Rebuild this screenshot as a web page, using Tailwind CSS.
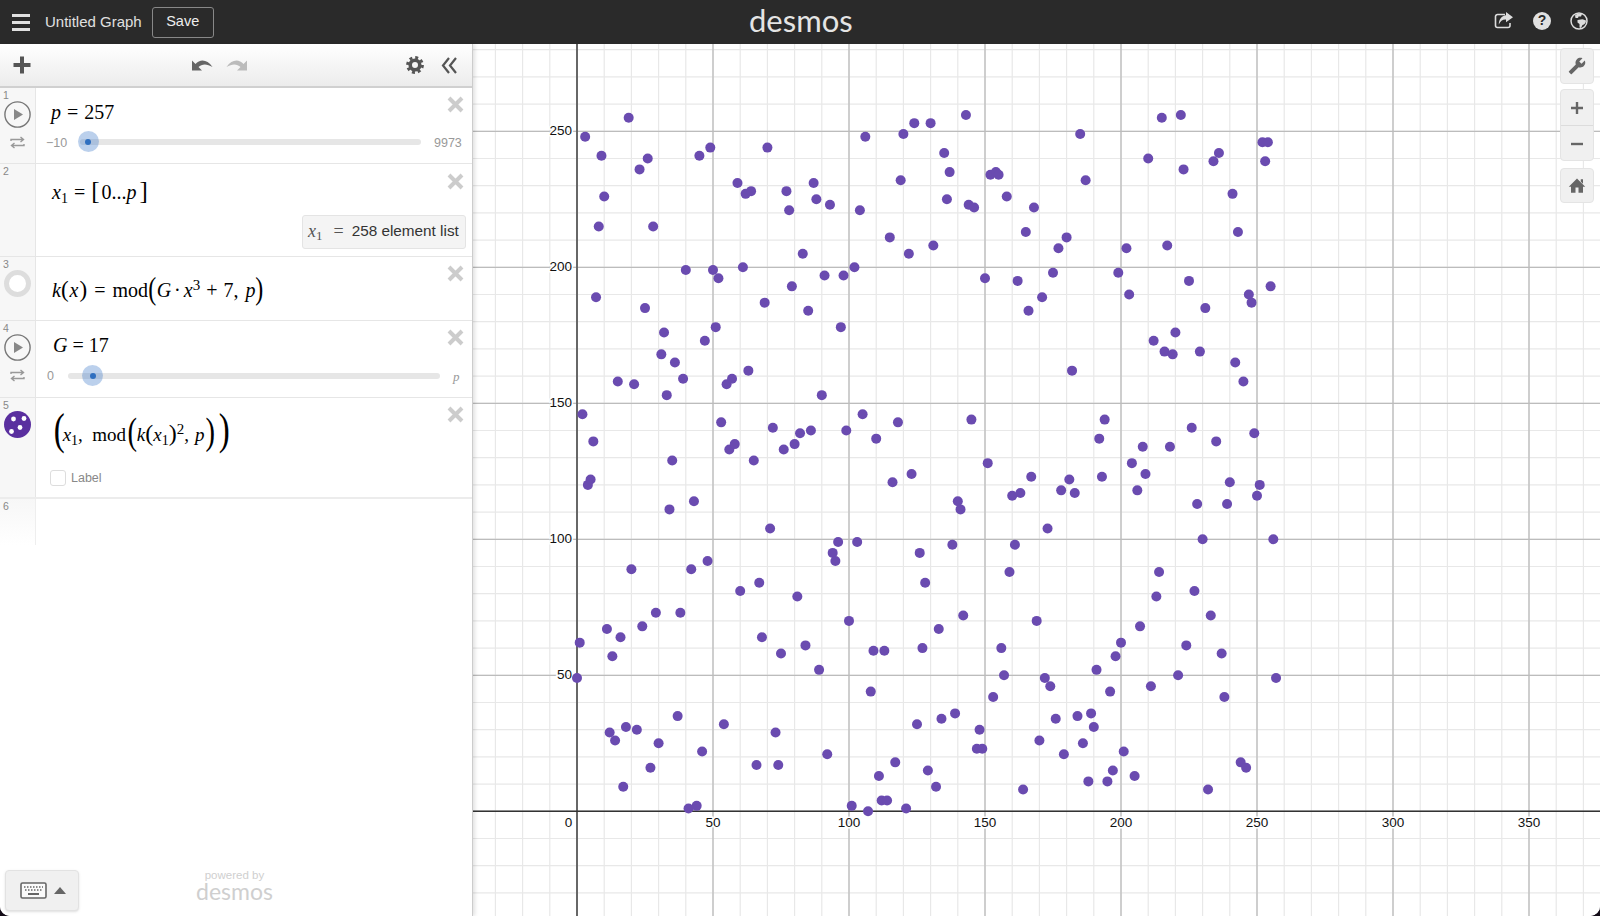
<!DOCTYPE html>
<html lang="en">
<head>
<meta charset="utf-8">
<title>Untitled Graph</title>
<script src="https://cdn.jsdelivr.net/npm/@tailwindcss/browser@4"></script>
</head>
<body class="bg-[#140c18] font-['Liberation_Sans',sans-serif]">
<div class="flex h-[916px] w-[1600px] flex-col overflow-hidden rounded-b-[10px] bg-white">

    <!-- Top bar -->
    <header class="relative flex h-[44px] shrink-0 items-center bg-[#2a2a2a] text-[#e0e0e0]">
        <div class="ml-[12px] flex w-[18px] flex-col gap-[4px]">
            <div class="h-[3px] bg-[#e0e0e0]"></div>
            <div class="h-[3px] bg-[#e0e0e0]"></div>
            <div class="h-[3px] bg-[#e0e0e0]"></div>
        </div>
        <span class="ml-[15px] text-[15px]">Untitled Graph</span>
        <button class="ml-[10px] h-[31px] w-[62px] rounded-[3px] border border-[#888] text-[14.5px] text-[#eee]">Save</button>
        <span class="absolute left-[749px] top-[0px] font-['Lato',sans-serif] text-[31px] leading-[40px] text-[#e4e4e4]">desmos</span>
        <div class="mb-[3px] ml-auto flex items-center">
            <svg class="mr-[20px]" width="19" height="17" viewBox="0 0 19 17" fill="none">
                <path d="M11 2.5H3.5a2 2 0 0 0-2 2V13.5a2 2 0 0 0 2 2H14a2 2 0 0 0 2-2V11" stroke="#ddd" stroke-width="1.6"/>
                <path d="M12 0L19 5.2L12 10.2V7.4C8.6 7.2 6.2 9 4.8 12.5C4.8 7.4 7.6 3.6 12 3.2Z" fill="#ddd"/>
            </svg>
            <div class="mr-[19px] flex h-[18px] w-[18px] items-center justify-center rounded-full bg-[#e0e0e0] text-[14px] font-bold text-[#2a2a2a]">?</div>
            <svg class="mr-[12px]" width="18" height="18" viewBox="0 0 18 18" fill="none">
                <circle cx="9" cy="9" r="8" stroke="#ddd" stroke-width="1.5"/>
                <path d="M5 3.5C7 1.5 10 1 12 2L11 4.5L8.5 4.5L8 6L5.5 6Z" fill="#ddd"/>
                <path d="M7.5 8L12.5 7.2L16 8.5C16 11 14.5 12.5 12.5 13L11 16L9.5 15.5L9.5 12L7.5 10.5Z" fill="#ddd"/>
            </svg>
        </div>
    </header>

    <div class="flex min-h-0 flex-1">
        <!-- Expression list -->
        <aside class="z-10 flex w-[473px] shrink-0 flex-col border-r border-[#ccc] bg-white shadow-[2px_0_4px_rgba(0,0,0,.12)]">
            <!-- Toolbar -->
            <div class="flex h-[44px] shrink-0 items-center border-b-2 border-[#d0d0d0] bg-gradient-to-b from-[#ffffff] to-[#ececec]">
                <svg class="ml-[13px]" width="18" height="18" viewBox="0 0 18 18"><path d="M9 0.5V17.5M0.5 9H17.5" stroke="#555" stroke-width="4"/></svg>
                <svg class="mb-[2px] ml-[160px]" width="22" height="13" viewBox="0 0 22 13"><path d="M1 12.5V2.5L4.5 6C9 1 16 1 21.5 9C16 5.5 11 5.5 7.5 9L11 12.5Z" fill="#666"/></svg>
                <svg class="mb-[2px] ml-[13px]" width="22" height="13" viewBox="0 0 22 13"><path d="M21 12.5V2.5L17.5 6C13 1 6 1 0.5 9C6 5.5 11 5.5 14.5 9L11 12.5Z" fill="#bbb"/></svg>
                <svg class="ml-[158px]" width="18" height="18" viewBox="0 0 18 18" fill="none">
                    <circle cx="9" cy="9" r="7.5" stroke="#555" stroke-width="2.8" stroke-dasharray="2.95 2.94"/>
                    <circle cx="9" cy="9" r="4.8" stroke="#555" stroke-width="3.6"/>
                </svg>
                <svg class="ml-[17px]" width="16" height="17" viewBox="0 0 16 17" fill="none">
                    <path d="M8 1L2 8.5L8 16M15 1L9 8.5L15 16" stroke="#555" stroke-width="2.2"/>
                </svg>
            </div>

            <!-- 1: p slider -->
            <div class="relative flex h-[76px] shrink-0 border-b border-[#e6e6e6]">
                <div class="w-[36px] shrink-0 border-r border-[#e6e6e6] bg-[#f7f7f7]">
                    <div class="h-[13px] pl-[3px] pt-[2px] text-[10.5px] leading-none text-[#888]">1</div>
                    <svg class="mx-auto" width="27" height="27" viewBox="0 0 27 27" fill="none">
                        <circle cx="13.5" cy="13.5" r="12.6" stroke="#777" stroke-width="1.4"/>
                        <path d="M10 8L19 13.5L10 19Z" fill="#888"/>
                    </svg>
                    <svg class="mx-auto mt-[8px]" width="15" height="13" viewBox="0 0 15 13" fill="none">
                        <path d="M1 5V3.5H13M10.5 1L13.5 3.5L10.5 6M14 8V9.5H2M4.5 7L1.5 9.5L4.5 12" stroke="#999" stroke-width="1.4"/>
                    </svg>
                </div>
                <div class="min-w-0 flex-1 pl-[10px]">
                    <div class="h-[38px] pl-[5px] pt-[12px] font-['Liberation_Serif',serif] text-[20px] leading-[24px] text-black"><i>p</i><span class="mx-[6px]">=</span>257</div>
                    <div class="flex h-[24px] items-center pt-[7px]">
                        <span class="w-[34px] pt-[4px] text-[12.5px] text-[#999]">−10</span>
                        <div class="relative h-[6px] w-[341px] rounded-full bg-[#e6e6e6]">
                            <div class="absolute left-[-2.5px] top-[-7.5px] flex h-[21px] w-[21px] items-center justify-center rounded-full bg-[#3c78c8]/35">
                                <div class="h-[6px] w-[6px] rounded-full bg-[#2f6fc0]"></div>
                            </div>
                        </div>
                        <span class="ml-[13px] pt-[4px] text-[12.5px] text-[#999]">9973</span>
                    </div>
                </div>
                <svg class="absolute right-[8px] top-[8px]" width="17" height="17" viewBox="0 0 17 17"><path d="M2 2L15 15M15 2L2 15" stroke="#ccc" stroke-width="4"/></svg>
            </div>

            <!-- 2: x1 list -->
            <div class="relative flex h-[93px] shrink-0 border-b border-[#e6e6e6]">
                <div class="w-[36px] shrink-0 border-r border-[#e6e6e6] bg-[#f7f7f7]">
                    <div class="h-[13px] pl-[3px] pt-[2px] text-[10.5px] leading-none text-[#888]">2</div>
                </div>
                <div class="min-w-0 flex-1">
                    <div class="h-[51px] whitespace-nowrap pl-[16px] pt-[13px] font-['Liberation_Serif',serif] text-[20px] leading-[28px] text-black">
                        <i>x</i><sub class="text-[14px]">1</sub><span class="mx-[6px]">=</span><span class="mr-[2px] text-[25px] font-light">[</span>0...<i>p</i><span class="ml-[3px] text-[25px] font-light">]</span>
                    </div>
                    <div class="ml-auto mr-[6px] flex h-[34px] w-[164px] items-center rounded-[3px] border border-[#e4e4e4] bg-[#f4f4f4] pb-[2px] pl-[5px]">
                        <span class="font-['Liberation_Serif',serif] text-[18px] text-[#555]"><i>x</i><sub class="text-[13px]">1</sub></span>
                        <span class="ml-[11px] font-['Liberation_Serif',serif] text-[18px] text-[#555]">=</span>
                        <span class="ml-[8px] whitespace-nowrap text-[15.3px] text-[#333]">258 element list</span>
                    </div>
                </div>
                <svg class="absolute right-[8px] top-[9px]" width="17" height="17" viewBox="0 0 17 17"><path d="M2 2L15 15M15 2L2 15" stroke="#ccc" stroke-width="4"/></svg>
            </div>

            <!-- 3: k(x) -->
            <div class="relative flex h-[64px] shrink-0 border-b border-[#e6e6e6]">
                <div class="w-[36px] shrink-0 border-r border-[#e6e6e6] bg-[#f7f7f7]">
                    <div class="h-[13px] pl-[3px] pt-[2px] text-[10.5px] leading-none text-[#888]">3</div>
                    <svg class="mx-auto" width="27" height="27" viewBox="0 0 27 27" fill="none">
                        <circle cx="13.5" cy="13.5" r="11" fill="#fff" stroke="#ddd" stroke-width="5"/>
                    </svg>
                </div>
                <div class="min-w-0 flex-1 whitespace-nowrap pl-[16px] pt-[13px] font-['Liberation_Serif',serif] text-[20px] leading-[34px] text-black">
                    <i>k</i><span class="text-[23px] font-light">(</span><i class="mx-[1px]">x</i><span class="text-[23px] font-light">)</span><span class="mx-[7px]">=</span>mod<span class="relative top-[2px] mx-[-1px] inline-block scale-x-75 text-[32px] font-light leading-none">(</span><i>G</i><span class="mx-[3px]">·</span><i>x</i><sup class="text-[15px]">3</sup><span class="mx-[6px]">+</span>7,<i class="ml-[7px]">p</i><span class="relative top-[2px] mx-[-1px] inline-block scale-x-75 text-[32px] font-light leading-none">)</span>
                </div>
                <svg class="absolute right-[8px] top-[8px]" width="17" height="17" viewBox="0 0 17 17"><path d="M2 2L15 15M15 2L2 15" stroke="#ccc" stroke-width="4"/></svg>
            </div>

            <!-- 4: G slider -->
            <div class="relative flex h-[77px] shrink-0 border-b border-[#e6e6e6]">
                <div class="w-[36px] shrink-0 border-r border-[#e6e6e6] bg-[#f7f7f7]">
                    <div class="h-[13px] pl-[3px] pt-[2px] text-[10.5px] leading-none text-[#888]">4</div>
                    <svg class="mx-auto" width="27" height="27" viewBox="0 0 27 27" fill="none">
                        <circle cx="13.5" cy="13.5" r="12.6" stroke="#777" stroke-width="1.4"/>
                        <path d="M10 8L19 13.5L10 19Z" fill="#888"/>
                    </svg>
                    <svg class="mx-auto mt-[8px]" width="15" height="13" viewBox="0 0 15 13" fill="none">
                        <path d="M1 5V3.5H13M10.5 1L13.5 3.5L10.5 6M14 8V9.5H2M4.5 7L1.5 9.5L4.5 12" stroke="#999" stroke-width="1.4"/>
                    </svg>
                </div>
                <div class="min-w-0 flex-1 pl-[11px]">
                    <div class="h-[38px] pl-[6px] pt-[12px] font-['Liberation_Serif',serif] text-[20px] leading-[24px] text-black"><i>G</i><span class="mx-[5px]">=</span>17</div>
                    <div class="flex h-[24px] items-center pt-[9px]">
                        <span class="w-[21px] pt-[2px] text-[12.5px] text-[#999]">0</span>
                        <div class="relative h-[6px] w-[372px] rounded-full bg-[#e6e6e6]">
                            <div class="absolute left-[14px] top-[-7.5px] flex h-[21px] w-[21px] items-center justify-center rounded-full bg-[#3c78c8]/35">
                                <div class="h-[6px] w-[6px] rounded-full bg-[#2f6fc0]"></div>
                            </div>
                        </div>
                        <i class="ml-[13px] pt-[2px] font-['Liberation_Serif',serif] text-[13px] text-[#999]">p</i>
                    </div>
                </div>
                <svg class="absolute right-[8px] top-[8px]" width="17" height="17" viewBox="0 0 17 17"><path d="M2 2L15 15M15 2L2 15" stroke="#ccc" stroke-width="4"/></svg>
            </div>

            <!-- 5: points -->
            <div class="relative flex h-[101px] shrink-0 border-b-2 border-[#ececec]">
                <div class="w-[36px] shrink-0 border-r border-[#e6e6e6] bg-[#f7f7f7]">
                    <div class="h-[13px] pl-[3px] pt-[2px] text-[10.5px] leading-none text-[#888]">5</div>
                    <svg class="mx-auto" width="27" height="27" viewBox="0 0 27 27">
                        <circle cx="13.5" cy="13.5" r="13.5" fill="#5a2f9f"/>
                        <circle cx="9.5" cy="8" r="2.4" fill="#fff"/>
                        <circle cx="20" cy="7.5" r="2.4" fill="#fff"/>
                        <circle cx="16" cy="16.5" r="2.4" fill="#fff"/>
                        <circle cx="7.5" cy="20.5" r="2.4" fill="#fff"/>
                    </svg>
                </div>
                <div class="min-w-0 flex-1 pl-[14px]">
                    <div class="h-[71px] whitespace-nowrap pl-[2px] pt-[7px] font-['Liberation_Serif',serif] text-[19px] leading-[50px] text-black">
                        <span class="relative top-[3px] mr-[-4px] inline-block scale-x-75 text-[44px] font-light leading-none">(</span><i>x</i><sub class="text-[14px]">1</sub>, &nbsp;mod<span class="relative top-[3px] mr-[-2px] inline-block scale-x-75 text-[38px] font-light leading-none">(</span><i>k</i><span class="text-[24px] font-light">(</span><i>x</i><sub class="text-[14px]">1</sub><span class="text-[24px] font-light">)</span><sup class="text-[15px]">2</sup>,<i class="ml-[6px]">p</i><span class="relative top-[3px] inline-block scale-x-75 text-[38px] font-light leading-none">)</span><span class="relative top-[3px] inline-block scale-x-75 text-[44px] font-light leading-none">)</span>
                    </div>
                    <div class="flex items-center">
                        <div class="h-[16px] w-[16px] rounded-[3px] border border-[#ddd] bg-white"></div>
                        <span class="ml-[5px] text-[12.5px] text-[#888]">Label</span>
                    </div>
                </div>
                <svg class="absolute right-[8px] top-[8px]" width="17" height="17" viewBox="0 0 17 17"><path d="M2 2L15 15M15 2L2 15" stroke="#ccc" stroke-width="4"/></svg>
            </div>

            <!-- 6: empty -->
            <div class="flex h-[46px] shrink-0">
                <div class="w-[36px] shrink-0 border-r border-[#eee] bg-gradient-to-b from-[#f7f7f7] to-[#ffffff]">
                    <div class="h-[13px] pl-[3px] pt-[2px] text-[10.5px] leading-none text-[#888]">6</div>
                </div>
            </div>

            <!-- Footer -->
            <div class="mt-auto flex items-end pb-[5px]">
                <div class="ml-[5px] flex h-[41px] w-[74px] items-center rounded-[4px] border border-[#e2e2e2] bg-[#f0f0f0] pl-[14px] shadow-sm">
                    <svg width="27" height="17" viewBox="0 0 27 17" fill="none">
                        <rect x="1" y="1" width="25" height="15" rx="1.5" fill="#fafafa" stroke="#666" stroke-width="1.6"/>
                        <path d="M4 5H23M5 8H22" stroke="#666" stroke-width="1.6" stroke-dasharray="1.5 1.5"/>
                        <path d="M8 12H19" stroke="#666" stroke-width="1.8"/>
                    </svg>
                    <svg class="ml-[7px]" width="12" height="8" viewBox="0 0 12 8"><path d="M6 0L12 7H0Z" fill="#666"/></svg>
                </div>
                <div class="ml-[117px] flex flex-col items-center gap-[1px] pb-[10px] text-[#cfcfcf]">
                    <span class="text-[11.5px] leading-[11px]">powered by</span>
                    <span class="font-['Lato',sans-serif] text-[23px] leading-[19px]">desmos</span>
                </div>
            </div>
        </aside>

        <!-- Graph -->
        <main class="relative min-w-0 flex-1 overflow-hidden bg-white">
            <svg id="graph" class="block h-full w-full font-['Liberation_Sans',sans-serif]" viewBox="473 44 1127 872"></svg>

            <div class="absolute right-[6px] top-[4px] flex w-[34px] flex-col gap-[5px]">
                <div class="flex h-[36px] items-center justify-center rounded-[4px] border border-[#e4e4e4] bg-[#f0f0f0]">
                    <svg width="18" height="18" viewBox="0 0 24 24"><path transform="matrix(-1 0 0 1 24 0)" d="M22.7 19l-9.1-9.1c.9-2.3.4-5-1.5-6.9-2-2-5-2.4-7.4-1.3L9 6 6 9 1.6 4.7C.4 7.1.9 10.1 2.9 12.1c1.9 1.9 4.6 2.4 6.9 1.5l9.1 9.1c.4.4 1 .4 1.4 0l2.3-2.3c.5-.4.5-1.1.1-1.4z" fill="#666"/></svg>
                </div>
                <div class="flex h-[72px] flex-col rounded-[4px] border border-[#e4e4e4] bg-[#f0f0f0]">
                    <div class="flex flex-1 items-center justify-center border-b border-[#dcdcdc] pt-[2px]">
                        <svg width="12" height="12" viewBox="0 0 12 12"><path d="M6 0V12M0 6H12" stroke="#666" stroke-width="2.4"/></svg>
                    </div>
                    <div class="flex flex-1 items-center justify-center pt-[2px]">
                        <svg width="12" height="12" viewBox="0 0 12 12"><path d="M0 6H12" stroke="#666" stroke-width="2.4"/></svg>
                    </div>
                </div>
                <div class="mt-[2px] flex h-[35px] items-center justify-center rounded-[4px] border border-[#e4e4e4] bg-[#f0f0f0]">
                    <svg width="18" height="18" viewBox="0 0 24 24"><path d="M10 21v-7h4v7h6v-8h3L12 2 1 13h3v8zM17 3h3v6l-3-3z" fill="#666"/></svg>
                </div>
            </div>
        </main>
    </div>
</div>

<script>
// Axes in page pixels, the viewBox of the svg matches the page
const originX = 577, originY = 811.3, scale = 2.72;
const xLeft = 473, xRight = 1600, yTop = 44, yBottom = 916;
const graph = document.getElementById('graph');
const NS = 'http://www.w3.org/2000/svg';

function add(tag, attrs, text) {
    const el = document.createElementNS(NS, tag);
    for (const k in attrs) el.setAttribute(k, attrs[k]);
    if (text !== undefined) el.textContent = text;
    graph.appendChild(el);
}

function gridLines(major, color, width) {
    const step = major * scale;
    for (let x = originX % step; x < xRight; x += step) {
        if (x >= xLeft) add('line', { x1: x, x2: x, y1: yTop, y2: yBottom, stroke: color, 'stroke-width': width });
    }
    for (let y = originY % step; y < yBottom; y += step) {
        if (y >= yTop) add('line', { x1: xLeft, x2: xRight, y1: y, y2: y, stroke: color, 'stroke-width': width });
    }
}

gridLines(10, '#e8e8e8', 1.2);
gridLines(50, '#bcbcbc', 1.3);
add('line', { x1: originX, x2: originX, y1: yTop, y2: yBottom, stroke: '#5c5c5c', 'stroke-width': 1.8 });
add('line', { x1: xLeft, x2: xRight, y1: originY, y2: originY, stroke: '#333', 'stroke-width': 1.4 });

const labelAttrs = { 'font-size': 13.5, fill: '#111', stroke: '#fff', 'stroke-width': 3, 'paint-order': 'stroke' };
add('text', { ...labelAttrs, x: 568.5, y: 827, 'text-anchor': 'middle' }, '0');
for (let v = 50; v <= 350; v += 50) {
    add('text', { ...labelAttrs, x: originX + v * scale, y: 827, 'text-anchor': 'middle' }, v);
}
for (let v = 50; v <= 250; v += 50) {
    add('text', { ...labelAttrs, x: 572, y: originY - v * scale + 4, 'text-anchor': 'end' }, v);
}

// (x1, mod(k(x1)^2, p)) with k(x) = mod(G x^3 + 7, p)
const p = 257, G = 17;
for (let x = 0; x <= p; x++) {
    const k = (G * x * x * x + 7) % p;
    const y = (k * k) % p;
    add('circle', { cx: originX + x * scale, cy: originY - y * scale, r: 5, fill: '#6a4bb0' });
}
</script>
</body>
</html>
